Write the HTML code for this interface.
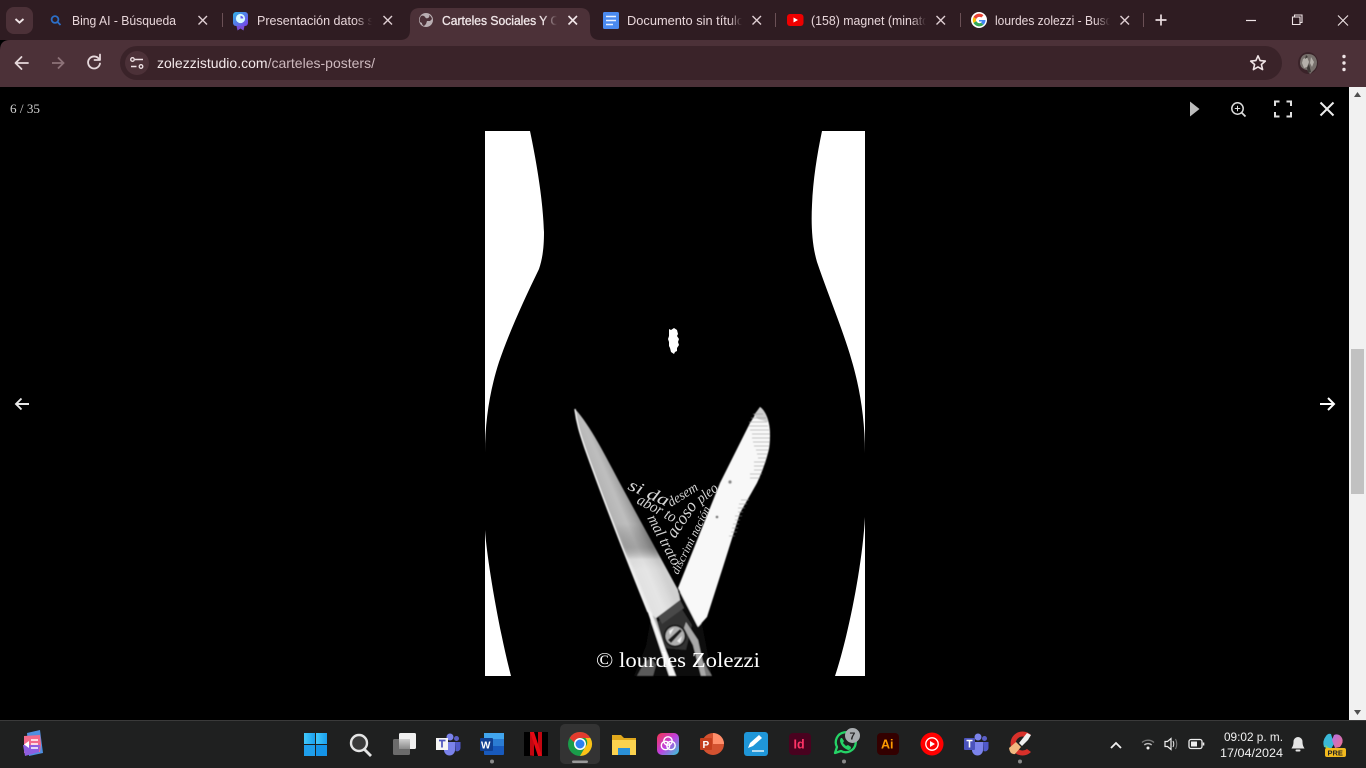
<!DOCTYPE html>
<html lang="es"><head><meta charset="utf-8"><title>Carteles Sociales</title>
<style>
html,body{margin:0;padding:0;background:#000;width:1366px;height:768px;overflow:hidden}
svg{display:block;position:absolute;left:0;top:0}
text{font-family:"Liberation Sans",sans-serif}
.tab{font-size:12.5px;fill:#e8d6da}
.x{stroke:#e0cfd3;stroke-width:1.4;fill:none}
.sep{stroke:#6b5056;stroke-width:1}
.tb{stroke:#e6d8db;stroke-width:1.8;fill:none;stroke-linecap:round;stroke-linejoin:round}
.ser{font-family:"Liberation Serif",serif;font-style:italic;fill:#d4d4d4}
</style></head><body>
<svg width="1366" height="768" viewBox="0 0 1366 768" xmlns="http://www.w3.org/2000/svg">
<defs>
<linearGradient id="f" x1="0" x2="1" y1="0" y2="0"><stop offset="0" stop-color="#2f1c22" stop-opacity="0"/><stop offset="1" stop-color="#2f1c22"/></linearGradient>
<linearGradient id="fa" x1="0" x2="1" y1="0" y2="0"><stop offset="0" stop-color="#4c3138" stop-opacity="0"/><stop offset="1" stop-color="#4c3138"/></linearGradient>
<linearGradient id="bl" x1="604" y1="505.500" x2="630" y2="494.500" gradientUnits="userSpaceOnUse"><stop offset="0" stop-color="#dcdcdc"/><stop offset=".12" stop-color="#b4b4b4"/><stop offset=".5" stop-color="#bebebe"/><stop offset=".8" stop-color="#a4a4a4"/><stop offset="1" stop-color="#8a8a8a"/></linearGradient>
<linearGradient id="bl2" x1="0" y1="0" x2="0" y2="1"><stop offset="0" stop-color="#000" stop-opacity="0"/><stop offset=".55" stop-color="#000" stop-opacity="0"/><stop offset=".66" stop-color="#555" stop-opacity=".25"/><stop offset=".72" stop-color="#fff" stop-opacity=".5"/><stop offset=".77" stop-color="#fff" stop-opacity=".6"/><stop offset="1" stop-color="#fff" stop-opacity=".6"/></linearGradient>
<linearGradient id="w" x1="0" x2="1" y1="0" y2="0"><stop offset="0" stop-color="#41c8fb"/><stop offset="1" stop-color="#1a9fee"/></linearGradient>
<linearGradient id="cc" x1="0" x2="1" y1="0" y2="1"><stop offset="0" stop-color="#f5344e"/><stop offset=".5" stop-color="#c040e0"/><stop offset="1" stop-color="#30d0d8"/></linearGradient>
<linearGradient id="tp" x1="0" x2="1" y1="0" y2="1"><stop offset="0" stop-color="#2fb6e8"/><stop offset="1" stop-color="#7a3fe8"/></linearGradient>
<linearGradient id="cp" x1="0" x2="1" y1="0" y2="1"><stop offset="0" stop-color="#b070e8"/><stop offset="1" stop-color="#f0708a"/></linearGradient>
<linearGradient id="tv" x1="0" x2="0" y1="0" y2="1"><stop offset="0" stop-color="#cfcfcf"/><stop offset="1" stop-color="#8a8a8a"/></linearGradient>
<filter id="s" x="-5%" y="-5%" width="110%" height="110%"><feGaussianBlur stdDeviation=".4"/></filter>
</defs>

<!-- browser frame -->
<rect width="1366" height="40" fill="#2f1c22"/>
<path d="M0 50Q0 40 10 40H1366V87H0Z" fill="#4c3138"/>
<rect x="6" y="7" width="27" height="27" rx="8" fill="#4c3138"/>
<path d="M15.500 19l4 3.600 4-3.600" stroke="#f0e4e6" stroke-width="1.900" fill="none"/>

<!-- active tab -->
<path d="M400 40Q410 40 410 30V18Q410 8 420 8H580Q590 8 590 18V30Q590 40 600 40Z" fill="#4c3138"/>

<!-- tab 1 -->
<circle cx="55" cy="19.500" r="3.400" fill="none" stroke="#2c6fc8" stroke-width="1.800"/><path d="M57.500 22l3 3" stroke="#2c6fc8" stroke-width="1.800"/>
<text class="tab" x="72" y="25" textLength="104" lengthAdjust="spacingAndGlyphs">Bing AI - Búsqueda</text>
<path class="x" d="M198.500 16l8.500 8.500M207 16l-8.500 8.500"/>
<path class="sep" d="M222.500 13v14"/>
<!-- tab 2 -->
<rect x="233" y="12" width="15" height="14" rx="3" fill="url(#tp)"/><circle cx="240.500" cy="18.500" r="4.600" fill="#d8fbff"/><path d="M240.500 18.500v-2.800a2.800 2.800 0 0 1 2.800 2.800Z" fill="#6a5cf0"/><path d="M236.500 26l1 4.500 3-2 3 2 1-4.500Z" fill="#7a4fd8"/>
<text class="tab" x="257" y="25" textLength="142" lengthAdjust="spacingAndGlyphs">Presentación datos sobre</text>
<rect x="355" y="10" width="17" height="22" fill="url(#f)"/><rect x="372" y="10" width="32" height="22" fill="#2f1c22"/>
<path class="x" d="M383.500 16l8.500 8.500M392 16l-8.500 8.500"/>
<!-- tab 3 -->
<circle cx="426" cy="20" r="7" fill="#b9aeb2"/><path d="M421 16q3-1 4 1t3 1 1-3q2 1 3 4l-2 2-3 0-1 3-2 2q-2-1-2-3l-2-1q-1-3 1-6Z" fill="#4c3138"/>
<text class="tab" x="442" y="25" style="fill:#f0e6e8;stroke:#f0e6e8;stroke-width:.3px" textLength="130" lengthAdjust="spacingAndGlyphs">Carteles Sociales Y Cult</text>
<rect x="543" y="10" width="14" height="22" fill="url(#fa)"/><rect x="557" y="10" width="24" height="22" fill="#4c3138"/>
<path class="x" style="stroke:#f2e6e8;stroke-width:1.600" d="M568.500 16l8.500 8.500M577 16l-8.500 8.500"/>
<!-- tab 4 -->
<rect x="603" y="12" width="16" height="17" rx="1.500" fill="#4a8af0"/><path d="M606 16.500h10M606 20.500h10M606 24.500h7" stroke="#e8f0fe" stroke-width="1.600"/>
<text class="tab" x="627" y="25" textLength="117" lengthAdjust="spacingAndGlyphs">Documento sin título</text>
<rect x="729" y="10" width="13" height="22" fill="url(#f)"/><rect x="742" y="10" width="31" height="22" fill="#2f1c22"/>
<path class="x" d="M752.500 16l8.500 8.500M761 16l-8.500 8.500"/>
<path class="sep" d="M775.500 13v14"/>
<!-- tab 5 -->
<rect x="787" y="14" width="16.500" height="12" rx="3" fill="#ee0000"/><path d="M793.500 17.500l4.500 2.500-4.500 2.500Z" fill="#fff"/>
<text class="tab" x="811" y="25" textLength="118" lengthAdjust="spacingAndGlyphs">(158) magnet (minato</text>
<rect x="911" y="10" width="15" height="22" fill="url(#f)"/><rect x="926" y="10" width="31" height="22" fill="#2f1c22"/>
<path class="x" d="M936.500 16l8.500 8.500M945 16l-8.500 8.500"/>
<path class="sep" d="M960.500 13v14"/>
<!-- tab 6 -->
<circle cx="979" cy="20" r="8" fill="#fff"/>
<path d="M979 20h6.500a6.500 6.500 0 0 1-2 4.800l-2.500-2a3.300 3.300 0 0 0 1-1.300H979Z" fill="#4285f4"/>
<path d="M983.500 24.800a6.500 6.500 0 0 1-10-1.800l2.700-2a3.400 3.400 0 0 0 4.800 1.800Z" fill="#34a853"/>
<path d="M973.500 23a6.500 6.500 0 0 1 0-6l2.700 2a3.400 3.400 0 0 0 0 2Z" fill="#fbbc05"/>
<path d="M973.500 17a6.500 6.500 0 0 1 10-1.700l-2.200 2.200a3.400 3.400 0 0 0-5.100 1.500Z" fill="#ea4335"/>
<text class="tab" x="995" y="25" textLength="124" lengthAdjust="spacingAndGlyphs">lourdes zolezzi - Busqu</text>
<rect x="1095" y="10" width="15" height="22" fill="url(#f)"/><rect x="1110" y="10" width="30" height="22" fill="#2f1c22"/>
<path class="x" d="M1120.500 16l8.500 8.500M1129 16l-8.500 8.500"/>
<path class="sep" d="M1143.500 13v14"/>
<path d="M1161 14.500v11M1155.500 20h11" stroke="#eadcdf" stroke-width="1.700"/>
<!-- window controls -->
<path d="M1246 20.500h10" stroke="#efe4e6" stroke-width="1.200"/>
<path d="M1292.500 17h7.500v7.500h-7.500ZM1294.500 17v-2h7.500v7.500h-2" stroke="#efe4e6" stroke-width="1.100" fill="none"/>
<path d="M1338 15.500l10 10M1348 15.500l-10 10" stroke="#efe4e6" stroke-width="1.100"/>

<!-- toolbar -->
<path d="M28 63H16M21.500 57l-6 6 6 6" class="tb"/>
<path d="M52 63h11M58 57.500l5.500 5.500-5.500 5.500" fill="none" stroke="#8d7278" stroke-width="1.800"/>
<path d="M99 59a6 6 0 1 0 1 4.500" class="tb" stroke-linecap="butt"/><path d="M100 54.500v5.500h-5.500" class="tb"/>
<rect x="120" y="46" width="1162" height="34" rx="17" fill="#3a2329"/>
<circle cx="137" cy="63" r="12" fill="#4c3138"/>
<path d="M135 59.500h8M131 66.500h5.500" stroke="#efe2e5" stroke-width="1.500"/><circle cx="132.500" cy="59.500" r="1.800" fill="none" stroke="#efe2e5" stroke-width="1.300"/><circle cx="141" cy="66.500" r="1.800" fill="none" stroke="#efe2e5" stroke-width="1.300"/>
<text x="157" y="68" font-size="14" fill="#f3e8ea" textLength="218" lengthAdjust="spacingAndGlyphs">zolezzistudio.com<tspan fill="#cdb9be">/carteles-posters/</tspan></text>
<path d="M1258 55.800l2.100 4.800 5.200.5-3.900 3.400 1.200 5.100-4.600-2.700-4.600 2.700 1.200-5.100-3.900-3.400 5.200-.5Z" fill="none" stroke="#f0e4e6" stroke-width="1.600" stroke-linejoin="round"/>
<ellipse cx="1308" cy="63" rx="10" ry="11" fill="#3a2329"/>
<path d="M1300 64q0-10 8-10t9 8q0 6-4 9l-3 3-3-4q-6-1-7-6Z" fill="#77706c"/><path d="M1303 59l4-2 2 5-2 5-3 1-2-5ZM1311 57l3 5-2 5-2-4Z" fill="#b5b0aa"/><path d="M1309 64l2 8-3 1-1-5ZM1306 55l2 2-3 2Z" fill="#3d3835"/>
<circle cx="1344" cy="56.500" r="1.700" fill="#efe4e6"/><circle cx="1344" cy="63" r="1.700" fill="#efe4e6"/><circle cx="1344" cy="69.500" r="1.700" fill="#efe4e6"/>

<!-- page -->
<rect y="87" width="1349" height="633" fill="#000"/>
<rect x="1349" y="87" width="17" height="633" fill="#f1f1f1"/>
<rect x="1351" y="349" width="13" height="145" fill="#c1c1c1"/>
<path d="M1357.500 92l3.500 5h-7Z" fill="#505050"/><path d="M1357.500 715l3.500-5h-7Z" fill="#505050"/>

<text x="10" y="113" font-size="13" fill="#d0d0d0" style="font-family:'Liberation Serif',serif" textLength="30" lengthAdjust="spacingAndGlyphs">6 / 35</text>
<path d="M1190 101.500l9.500 7.500-9.500 7.500Z" fill="#bdbdbd"/>
<circle cx="1237.500" cy="108.500" r="5.700" fill="none" stroke="#dcdcdc" stroke-width="1.500"/><path d="M1241.500 112.500l4 4" stroke="#dcdcdc" stroke-width="1.800"/><path d="M1237.500 105.800v5.400M1234.800 108.500h5.400" stroke="#dcdcdc" stroke-width="1"/>
<path d="M1275 106v-4.500h4.500M1286.500 101.500h4.500v4.500M1291 112v4.500h-4.500M1279.500 116.500H1275V112" stroke="#e0e0e0" stroke-width="2" fill="none"/>
<path d="M1320.500 102.500l13 13M1333.500 102.500l-13 13" stroke="#ececec" stroke-width="2"/>
<path d="M29 404H16M21.500 398.500L16 404l5.500 5.500" stroke="#e8e8e8" stroke-width="1.900" fill="none"/>
<path d="M1320 404h13.500M1328 398l6 6-6 6" stroke="#fff" stroke-width="2" fill="none"/>

<!-- poster -->
<rect x="485" y="131" width="380" height="545" fill="#fff"/>
<path d="M530 131C534 150 543 195 544 232C544 250 542 260 539 269C525 298 510 330 499 362C490 390 485 420 485 453V530C487 560 499 630 511 676H835C847 640 862 570 865 517V453C865 420 860 390 853 365C845 335 830 300 817 262C812 245 811 225 812 205C813 180 817 155 822 131Z" fill="#000"/>
<path d="M669 329l2 1 3-2 3 2 1 4-1 2 2 3-1 3 1 3-2 3 0 3-2 1-1 2-3-2-1-4-1-2 0-4-1-3 1-3 0-4Z" fill="#fff"/>

<!-- scissors -->
<g filter="url(#s)">
<path d="M651 617L680 592L702 624L712 676H634L646 646Z" fill="#0c0c0c"/>
<path d="M656 623L680 606L692 625L686 650L664 648Z" fill="#303030"/>
<path d="M658 616L680 600L684 608L662 624Z" fill="#4a4a4a"/>
<path d="M637 676l7-13 7-5 5 7-3 11Z" fill="#5a5a5a"/>
<path d="M704 676l-4-12 3-3 9 15Z" fill="#777"/>
<path d="M686 622L698 640L706 676H701L693 645L684 628Z" fill="#a8a8a8"/>
<!-- right blade -->
<path d="M760 407C766 411 770 422 770 434C770 445 769 450 768 453C765 464 762 472 757 483L740 513L723 567L707 617L698 627L678 588L700 533L720 483L733 457L750 423Z" fill="#f8f8f8"/>
<path d="M760 407C764 410 767 416 768 422L758 419L754 415Z" fill="#cfcfcf"/>
<g stroke="#8f8f8f" stroke-width=".9" opacity=".55">
<path d="M753 414h10M751 418h15M749 422h18M749 426h19M750 430h19M752 434h18M752 438h18M753 442h17M754 446h15M756 450h13M757 454h11M758 458h9M754 462h12M754 466h10M754 470h9M750 474h12M750 478h10"/>
<path d="M741 500h8M739 504h8M738 508h7M738 512h5M735 516h7M735 520h5M733 524h6M732 528h6M731 532h6M729 536h6"/>
</g>
<circle cx="730" cy="482" r="1.700" fill="#8a8a8a"/><circle cx="717" cy="517" r="1.400" fill="#777"/>
<!-- left blade -->
<path d="M575 409C590 425 605 455 622 487L678 590L680 600L656 618L673 676H669L648 612C625 555 600 490 585 448C580 432 576 420 575 409Z" fill="url(#bl)"/>
<path d="M575 409C590 425 605 455 622 487L678 590L680 600L656 618L648 612C625 555 600 490 585 448C580 432 576 420 575 409Z" fill="url(#bl2)"/>
<path d="M575 409C577 425 581 436 585 448C600 490 625 555 648 612" fill="none" stroke="#f2f2f2" stroke-width="1.500"/>
<path d="M647 610L651 612L676 676H670Z" fill="#f5f5f5"/>
<!-- screw -->
<circle cx="675" cy="636" r="11.500" fill="#1c1c1c"/>
<circle cx="675" cy="636" r="9.500" fill="#b0b0b0"/>
<path d="M668 640l12-11 2 2-11 12Z" fill="#1a1a1a"/><path d="M669 631l5-3-4 7ZM677 641l5-5-2 7Z" fill="#f0f0f0"/>
</g>
<!-- triangle words -->
<g>
<text class="ser" font-size="17" transform="translate(627 489) rotate(24)" textLength="43" lengthAdjust="spacingAndGlyphs">si da</text>
<text class="ser" font-size="16" transform="translate(636 503) rotate(28)" textLength="42" lengthAdjust="spacingAndGlyphs">abor to</text>
<text class="ser" font-size="15.500" transform="translate(647 518) rotate(62)" textLength="55" lengthAdjust="spacingAndGlyphs">mal trato</text>
<text class="ser" font-size="14" transform="translate(671 507) rotate(-32)" textLength="33" lengthAdjust="spacingAndGlyphs">desem</text>
<text class="ser" font-size="15" transform="translate(701 504) rotate(-38)" textLength="23" lengthAdjust="spacingAndGlyphs">pleo</text>
<text class="ser" font-size="18" transform="translate(675 539) rotate(-56)" textLength="40" lengthAdjust="spacingAndGlyphs">acoso</text>
<text class="ser" font-size="11.500" transform="translate(678 575) rotate(-64)" textLength="74" lengthAdjust="spacingAndGlyphs">discrimi nación</text>
</g>
<text x="596" y="667" font-size="21.500" fill="#fff" style="font-family:'Liberation Serif',serif" textLength="164" lengthAdjust="spacingAndGlyphs">© lourdes Zolezzi</text>

<!-- taskbar -->
<rect y="720" width="1366" height="48" fill="#1f2020"/>
<rect y="720" width="1366" height="1" fill="#3a3a3a"/>
<!-- widgets -->
<path d="M27 733l13-3 3 23-14 3Z" fill="#4e8fe0"/><path d="M24 736l16-1 1 9-1 8-16 1Z" fill="#f26a8a"/><path d="M23 745h17l-1 7-14 4Z" fill="#8e5ee0"/><path d="M29 741l-5 3.500 5 3.500Z" fill="#fff"/><path d="M31 740h7M31 744h7M31 748h7" stroke="#fff" stroke-width="1.500"/>
<!-- start -->
<rect x="304" y="733" width="11" height="11" fill="url(#w)"/><rect x="316" y="733" width="11" height="11" fill="url(#w)"/><rect x="304" y="745" width="11" height="11" fill="#1f9fec"/><rect x="316" y="745" width="11" height="11" fill="#1494e8"/>
<!-- search -->
<circle cx="359" cy="743" r="8" fill="#3a3a3a" stroke="#e4e4e4" stroke-width="2.400"/><path d="M364.500 749.500l6.500 6.500" stroke="#e4e4e4" stroke-width="2.800"/>
<!-- task view -->
<rect x="393" y="739" width="17" height="16" rx="1.500" fill="#6b6b6b"/><rect x="399" y="733" width="17" height="16" rx="1.500" fill="#f0f0f0"/><path d="M399 739h11v10h-11Z" fill="url(#tv)"/>
<!-- teams 1 -->
<circle cx="450" cy="737" r="3.500" fill="#7b83eb"/><circle cx="456.500" cy="738.500" r="2.500" fill="#5b5fc7"/><path d="M444 742h11v8a5.500 5.500 0 0 1-11 0Z" fill="#7b83eb"/><path d="M455 742h5.500v6a3.500 3.500 0 0 1-5 3Z" fill="#5059c9"/><rect x="436" y="738" width="12" height="12" fill="#f5f5f5"/><path d="M439 740.500h6.500M442 740.500v7" stroke="#4b53bc" stroke-width="1.700"/>
<!-- word -->
<rect x="484" y="733" width="20" height="22" rx="1" fill="#185abd"/><rect x="484" y="733" width="20" height="6" fill="#41a5ee"/><rect x="484" y="739" width="20" height="7" fill="#2b7cd3"/><rect x="480" y="738" width="13" height="13" rx="1" fill="#103f91"/><text x="481" y="748.500" font-size="10" font-weight="700" fill="#fff">W</text>
<circle cx="492" cy="761.500" r="2" fill="#8a8a8a"/>
<!-- netflix -->
<rect x="524" y="732" width="24" height="24" fill="#000"/><path d="M530 732h4v24l-4-.5ZM538 732h4v23.500l-4 .5Z" fill="#c10610"/><path d="M530 732h4l8 24h-4Z" fill="#e50914"/>
<!-- chrome -->
<rect x="560" y="724" width="40" height="40" rx="5" fill="#333"/>
<circle cx="580" cy="744" r="12" fill="#1a9c4a"/><path d="M580 732a12 12 0 0 1 10.400 6H580a6 6 0 0 0-5.800 4.400L569.600 738A12 12 0 0 1 580 732Z" fill="#e33b2e"/><path d="M590.400 738A12 12 0 0 1 580 756l5.200-9a6 6 0 0 0 0-9Z" fill="#fbc116"/><circle cx="580" cy="744" r="6" fill="#fff"/><circle cx="580" cy="744" r="4.500" fill="#2d7ff0"/>
<rect x="572" y="760.500" width="16" height="2.500" rx="1.200" fill="#9a9a9a"/>
<!-- folder -->
<path d="M612 735h9l3 3h12v17h-24Z" fill="#e0a81c"/><rect x="612" y="740" width="24" height="15" fill="#fbd24e"/><rect x="618" y="748" width="12" height="7" fill="#2a90d8"/>
<!-- cc -->
<rect x="657" y="733" width="22" height="22" rx="5" fill="url(#cc)"/><circle cx="665.500" cy="745.500" r="4.200" fill="none" stroke="#fff" stroke-width="1.400"/><circle cx="671" cy="745.500" r="4.200" fill="none" stroke="#fff" stroke-width="1.400"/><circle cx="668" cy="741" r="4.200" fill="none" stroke="#fff" stroke-width="1.400"/>
<!-- ppt -->
<circle cx="713" cy="744" r="11" fill="#d35230"/><path d="M713 733a11 11 0 0 1 11 11h-11Z" fill="#ff8f6b"/><rect x="700" y="738" width="12" height="12" rx="1" fill="#c43e1c"/><text x="702.500" y="748" font-size="10" font-weight="700" fill="#fff">P</text>
<!-- pen -->
<rect x="744" y="732" width="24" height="24" rx="3" fill="#1f96d8"/><path d="M748 748l2-5 9-8 3 3-9 8Z" fill="#fff"/><path d="M752 751h12" stroke="#fff" stroke-width="1.300"/>
<!-- Id -->
<rect x="789" y="733" width="22" height="22" rx="4" fill="#49021f"/><text x="793.500" y="748.500" font-size="12.500" font-weight="700" fill="#ff3366">Id</text>
<!-- whatsapp -->
<path d="M835 753l2-6a10 10 0 1 1 4 4Z" fill="#1f2020" stroke="#25d366" stroke-width="2.300" stroke-linejoin="round"/>
<path d="M841 738q-2 2 0 6t7 6q3 0 3-3l-3-2-2 1-3-3 1-2-2-3Z" fill="#25d366"/>
<circle cx="852.500" cy="735.500" r="7.500" fill="#a8acaf"/><text x="849.500" y="739.500" font-size="10.500" font-weight="700" fill="#222">7</text>
<circle cx="844" cy="761.500" r="2" fill="#8a8a8a"/>
<!-- Ai -->
<rect x="877" y="733" width="22" height="22" rx="4" fill="#330000"/><text x="881" y="748.500" font-size="12.500" font-weight="700" fill="#ff9a00">Ai</text>
<!-- yt music -->
<circle cx="932" cy="744" r="11.500" fill="#f00"/><circle cx="932" cy="744" r="6.200" fill="none" stroke="#fff" stroke-width="1.300"/><path d="M930 741l5 3-5 3Z" fill="#fff"/>
<!-- teams 2 -->
<circle cx="978" cy="737" r="3.500" fill="#7b83eb"/><circle cx="984.500" cy="738.500" r="2.500" fill="#5b5fc7"/><path d="M972 742h11v8a5.500 5.500 0 0 1-11 0Z" fill="#7b83eb"/><path d="M983 742h5.500v6a3.500 3.500 0 0 1-5 3Z" fill="#5059c9"/><rect x="964" y="738" width="11" height="12" rx="1" fill="#4b53bc"/><path d="M966.500 740.500h6M969.500 740.500v7" stroke="#fff" stroke-width="1.600"/>
<!-- ccleaner -->
<path d="M1031 735a12 12 0 1 0 0 17l-4-3a7 7 0 1 1 0-11Z" fill="#d8302a"/><path d="M1027 733l4 2-3 5-6 6-3-3Z" fill="#f0f0f0"/><path d="M1009 748l7-6 5 5-6 7q-5 1-6-6Z" fill="#f2b880"/>
<circle cx="1020" cy="761.500" r="2" fill="#8a8a8a"/>

<!-- tray -->
<path d="M1111 748l5-5 5 5" stroke="#f0f0f0" stroke-width="1.800" fill="none"/>
<path d="M1142 742.500a9 9 0 0 1 12 0" stroke="#777" stroke-width="1.300" fill="none"/><path d="M1144.300 745a5.500 5.500 0 0 1 7.400 0" stroke="#bbb" stroke-width="1.300" fill="none"/><circle cx="1148" cy="748" r="1.500" fill="#eee"/>
<path d="M1165 741.500h2.500l3.500-3v11l-3.500-3H1165Z" fill="none" stroke="#eee" stroke-width="1.200"/><path d="M1173 741q1.500 3 0 6" stroke="#ddd" stroke-width="1.100" fill="none"/><path d="M1175.500 739q2.500 5 0 10" stroke="#777" stroke-width="1.100" fill="none"/>
<rect x="1189" y="739.500" width="13" height="9" rx="2" fill="none" stroke="#eee" stroke-width="1.300"/><rect x="1191" y="741.500" width="6" height="5" fill="#eee"/><rect x="1202.800" y="742.500" width="1.500" height="3" fill="#eee"/>
<text x="1224" y="741" font-size="12" fill="#f0f0f0" textLength="59" lengthAdjust="spacingAndGlyphs">09:02 p. m.</text>
<text x="1220" y="757" font-size="12" fill="#f0f0f0" textLength="63" lengthAdjust="spacingAndGlyphs">17/04/2024</text>
<path d="M1298 737a4.500 4.500 0 0 1 4.500 4.500c0 4 1 5 2 7h-13c1-2 2-3 2-7A4.500 4.500 0 0 1 1298 737Z" fill="#e4e4e4"/><rect x="1295.500" y="749.500" width="5" height="2" rx="1" fill="#e4e4e4"/>
<!-- copilot -->
<path d="M1326 736q2-3 5-2l3 10-3 5-7-2q-2-6 2-11Z" fill="#3ab8d8"/><path d="M1334 735q5-2 8 3 2 4-2 9l-5 1-3-8Z" fill="url(#cp)"/><path d="M1325 745l6 4h-5Z" fill="#8bd06a"/>
<rect x="1325" y="748" width="21" height="9" rx="2" fill="#f2b91e"/><text x="1327.500" y="755.500" font-size="7.500" font-weight="700" fill="#222">PRE</text>
</svg>
</body></html>
